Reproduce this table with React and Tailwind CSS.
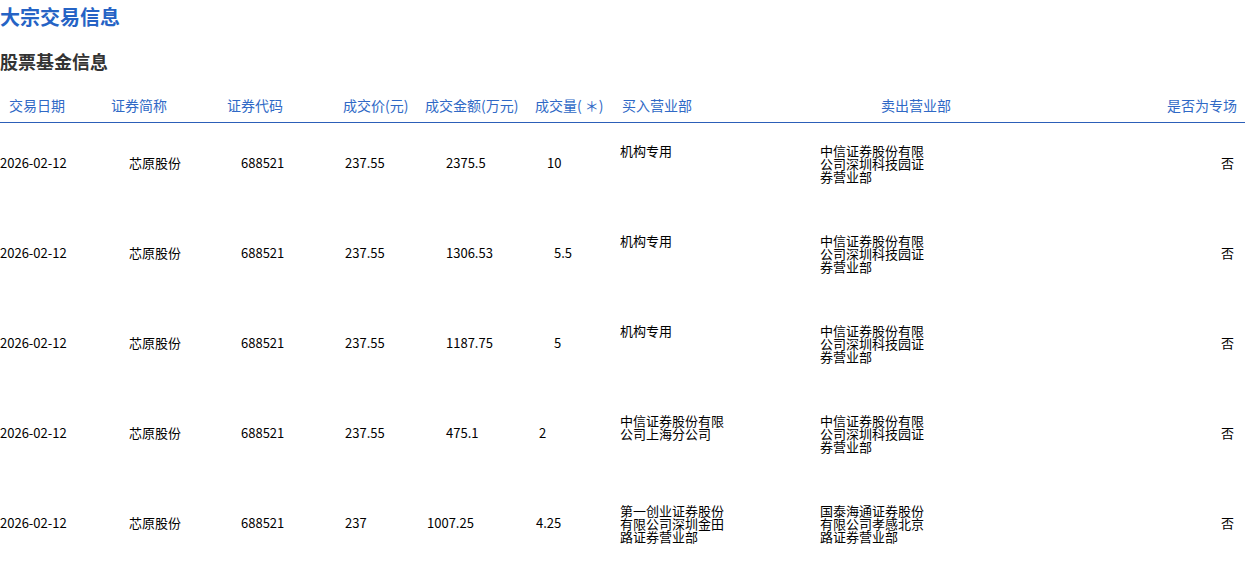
import React from 'react';

const rows = [
  { date: '2026-02-12', name: '芯原股份', code: '688521', price: '237.55', amount: '2375.5', amtPad: 'pl-[19px]', vol: '10', volPad: 'pl-[11px]', buy: ['机构专用'], sell: ['中信证券股份有限', '公司深圳科技园证', '券营业部'], special: '否' },
  { date: '2026-02-12', name: '芯原股份', code: '688521', price: '237.55', amount: '1306.53', amtPad: 'pl-[19px]', vol: '5.5', volPad: 'pl-[18px]', buy: ['机构专用'], sell: ['中信证券股份有限', '公司深圳科技园证', '券营业部'], special: '否' },
  { date: '2026-02-12', name: '芯原股份', code: '688521', price: '237.55', amount: '1187.75', amtPad: 'pl-[19px]', vol: '5', volPad: 'pl-[18px]', buy: ['机构专用'], sell: ['中信证券股份有限', '公司深圳科技园证', '券营业部'], special: '否' },
  { date: '2026-02-12', name: '芯原股份', code: '688521', price: '237.55', amount: '475.1', amtPad: 'pl-[19px]', vol: '2', volPad: 'pl-[3px]', buy: ['中信证券股份有限', '公司上海分公司'], sell: ['中信证券股份有限', '公司深圳科技园证', '券营业部'], special: '否' },
  { date: '2026-02-12', name: '芯原股份', code: '688521', price: '237', amount: '1007.25', amtPad: 'pl-0', vol: '4.25', volPad: 'pl-0', buy: ['第一创业证券股份', '有限公司深圳金田', '路证券营业部'], sell: ['国泰海通证券股份', '有限公司孝感北京', '路证券营业部'], special: '否' },
];

const App = () => {
  return (
    <div className="w-[1245px] h-[574px] bg-white overflow-hidden font-['Noto_Sans_CJK_SC','Noto_Sans',sans-serif]">
      <h1 className="text-[20px] leading-[34px] font-bold text-[#2563c5]">大宗交易信息</h1>
      <h2 className="mt-[10px] text-[18px] leading-[34px] font-bold text-[#333333]">股票基金信息</h2>

      <div className="mt-[13px] flex items-start h-[32px] pt-[4px] pl-[9px] text-[14px] leading-[20px] text-[#3069c6] border-b border-[#2c5fb8]">
        <div className="w-[102px] shrink-0">交易日期</div>
        <div className="w-[116px] shrink-0">证券简称</div>
        <div className="w-[116px] shrink-0">证券代码</div>
        <div className="w-[82px] shrink-0">成交价(元)</div>
        <div className="w-[110px] shrink-0">成交金额(万元)</div>
        <div className="w-[87px] shrink-0">成交量( ＊)</div>
        <div className="w-[259px] shrink-0">买入营业部</div>
        <div className="w-[259px] shrink-0">卖出营业部</div>
        <div className="flex-1 text-right pr-[8px]">是否为专场</div>
      </div>

      <div className="text-[13px] leading-[13px] text-black">
        {rows.map((r, i) => (
          <div key={i} className="flex items-start h-[90px] pt-[21px]">
            <div className="w-[129px] shrink-0 mt-[12px]">{r.date}</div>
            <div className="w-[112px] shrink-0 mt-[12px]">{r.name}</div>
            <div className="w-[104px] shrink-0 mt-[12px]">{r.code}</div>
            <div className="w-[82px] shrink-0 mt-[12px]">{r.price}</div>
            <div className={`w-[109px] shrink-0 mt-[12px] ${r.amtPad}`}>{r.amount}</div>
            <div className={`w-[84px] shrink-0 mt-[12px] ${r.volPad}`}>{r.vol}</div>
            <div className="w-[200px] shrink-0">
              {r.buy.map((l, j) => (
                <div key={j}>{l}</div>
              ))}
            </div>
            <div className="w-[200px] shrink-0">
              {r.sell.map((l, j) => (
                <div key={j}>{l}</div>
              ))}
            </div>
            <div className="flex-1 text-right pr-[11px] mt-[12px]">{r.special}</div>
          </div>
        ))}
      </div>
    </div>
  );
};

export default App;
